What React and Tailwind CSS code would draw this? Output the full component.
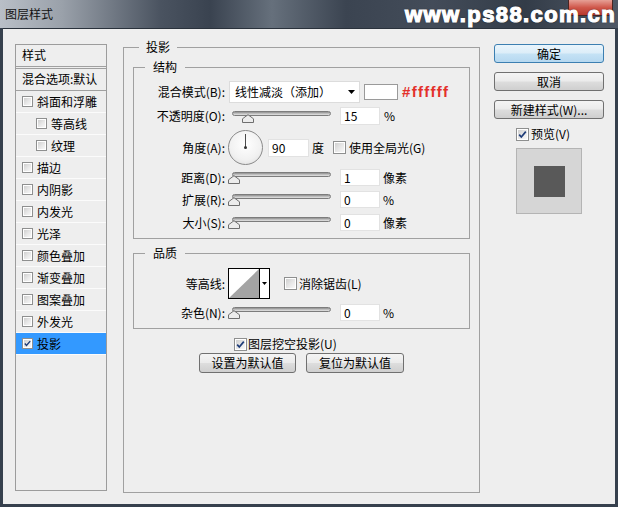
import React from "react";

const F = "font-['Noto_Sans_CJK_SC','Liberation_Sans',sans-serif]";

function Check({ checked, small }) {
  return (
    <span
      className={`relative inline-block shrink-0 border border-[#8e8f8f] bg-white ${
        small ? "w-[11px] h-[11px]" : "w-[13px] h-[13px]"
      }`}
    >
      <span className="absolute inset-[1px] bg-[linear-gradient(135deg,#d0d0d0_0%,#e6e6e6_50%,#f8f8f8_100%)]" />
      {checked && (
        <svg
          className="absolute inset-0"
          viewBox="0 0 11 11"
          width="100%"
          height="100%"
        >
          <path
            d="M2.2 5.6 L4.3 8 L8.8 2.6"
            fill="none"
            stroke="#1e3c78"
            strokeWidth="1.7"
          />
        </svg>
      )}
    </span>
  );
}

function Item({ label, indent, checked, selected }) {
  return (
    <div
      className={`h-[22px] flex items-center border-b border-[#fbfbfb] ${
        selected ? "bg-[#3399ff]" : ""
      } ${indent ? "pl-[20px]" : "pl-[6px]"}`}
    >
      <Check small checked={checked} />
      <span className="ml-[4px] leading-[14px]">{label}</span>
    </div>
  );
}

function Slider({ thumb }) {
  return (
    <div className="relative w-[104px] h-[17px] shrink-0">
      <div className="absolute left-[4px] top-[3px] w-[99px] h-[5px] rounded-full border border-[#7c7c7c] bg-[linear-gradient(180deg,#8e8e8e_0%,#bdbdbd_50%,#e4e4e4_100%)]" />
      <svg
        className={`absolute top-[6px] ${thumb}`}
        width="12"
        height="9"
        viewBox="0 0 12 9"
      >
        <path
          d="M0.5 8.5 V4.8 L6 0.7 L11.5 4.8 V8.5 Z"
          fill="#ececec"
          stroke="#6e6e6e"
        />
      </svg>
    </div>
  );
}

function Field({ children, w = "w-[40px]", h = "h-[17px]" }) {
  return (
    <div
      className={`${w} ${h} shrink-0 bg-white border border-[#e2e2e2] pl-[3px] flex items-center`}
    >
      {children}
    </div>
  );
}

function Label({ children }) {
  return <div className="w-[91px] shrink-0 text-right">{children}</div>;
}

function SliderRow({ label, value, unit, extra = "mt-[5px]" }) {
  return (
    <div className={`flex items-center h-[17px] ${extra}`}>
      <Label>{label}</Label>
      <div className="ml-[3px]">
        <Slider thumb="left-[0px]" />
      </div>
      <div className="ml-[8px]">
        <Field>{value}</Field>
      </div>
      <span className="ml-[3px]">{unit}</span>
    </div>
  );
}

function Button({ children, primary, className = "" }) {
  return (
    <div
      className={`flex items-center justify-center rounded-[3px] border ${
        primary
          ? "border-[#3c7fb1] bg-[linear-gradient(180deg,#eaf5fc_0%,#dcedf8_48%,#c5e2f5_52%,#b6d8f0_100%)]"
          : "border-[#707070] bg-[linear-gradient(180deg,#f4f4f4_0%,#ebebeb_48%,#dddddd_52%,#cfcfcf_100%)]"
      } ${className}`}
    >
      {children}
    </div>
  );
}

export default function App() {
  const items = [
    { label: "斜面和浮雕" },
    { label: "等高线", indent: true },
    { label: "纹理", indent: true },
    { label: "描边" },
    { label: "内阴影" },
    { label: "内发光" },
    { label: "光泽" },
    { label: "颜色叠加" },
    { label: "渐变叠加" },
    { label: "图案叠加" },
    { label: "外发光" },
    { label: "投影", checked: true, selected: true },
  ];

  return (
    <div
      className={`w-[618px] h-[507px] overflow-hidden bg-[#36404d] flex flex-col ${F} text-[12px] leading-[14px] text-black`}
    >
      {/* Title bar */}
      <div className="relative h-[28px] shrink-0 flex items-center justify-between pl-[5px] pr-[2px] bg-[linear-gradient(90deg,#b9bfc7_0%,#9aa1aa_10%,#4a5360_26%,#3a4350_34%,#66707c_44%,#3b4451_56%,#434c59_70%,#333c48_85%,#4f5865_100%)]">
        <div className="absolute right-[5px] top-0 w-[45px] h-[16px] rounded-b-[4px] border border-t-0 border-[#4a2522] bg-[linear-gradient(180deg,#e6a096_0%,#d0584b_50%,#b7382c_100%)]" />
        <span className="relative text-[#111]">图层样式</span>
        <span className="relative mt-[2px] font-['Liberation_Sans',sans-serif] font-bold text-[22px] leading-[24px] tracking-[1.4px] text-white [-webkit-text-stroke:1.2px_white] [text-shadow:0_0_2px_#000]">
          www.ps88.com.cn
        </span>
      </div>

      {/* Body */}
      <div className="flex-1 mx-[3px] mb-[3px] bg-[#eeeeee] border-t border-[#2a323c] flex items-start pl-[12px] pt-[11px]">
        {/* Left list */}
        <div className="mt-[4px] w-[92px] h-[447px] shrink-0 border border-[#9c9c9c]">
          <div className="h-[22px] border-b border-[#a0a0a0] pl-[6px] flex items-center pb-[2px]">
            样式
          </div>
          <div className="mt-[1px] h-[23px] border-t border-b border-[#a0a0a0] pl-[6px] flex items-center pb-[2px]">
            混合选项:默认
          </div>
          {items.map((it) => (
            <Item key={it.label} {...it} />
          ))}
        </div>

        {/* Main */}
        <fieldset className="ml-[16px] w-[357px] h-[453px] shrink-0 border border-[#a0a0a0] px-[9px] pt-[6px]">
          <legend className="ml-[6px] px-[7px] leading-[14px]">投影</legend>

          <fieldset className="w-[337px] border border-[#a0a0a0] pt-[7px] pb-[7px]">
            <legend className="ml-[11px] px-[8px] leading-[14px]">结构</legend>

            {/* blend mode */}
            <div className="flex items-center h-[22px]">
              <Label>混合模式(B):</Label>
              <div className="ml-[4px] w-[131px] h-[22px] bg-white border border-[#dcdcdc] flex items-center pl-[5px] pr-[4px] justify-between">
                <span>线性减淡（添加）</span>
                <svg width="7" height="4" viewBox="0 0 7 4">
                  <path d="M0 0H7L3.5 4Z" fill="#000" />
                </svg>
              </div>
              <div className="ml-[4px] w-[34px] h-[16px] bg-white border border-[#9a9a9a]" />
              <span className="ml-[4px] font-['Liberation_Sans',sans-serif] font-bold text-[15px] tracking-[1.3px] text-[#e3302a]">
                #ffffff
              </span>
            </div>

            {/* opacity */}
            <div className="flex items-center h-[18px] mt-[4px]">
              <Label>不透明度(O):</Label>
              <div className="ml-[3px]">
                <Slider thumb="left-[14px]" />
              </div>
              <div className="ml-[8px]">
                <Field h="h-[18px]">15</Field>
              </div>
              <span className="ml-[4px]">%</span>
            </div>

            {/* angle */}
            <div className="flex items-center h-[35px] mt-[5px]">
              <Label>角度(A):</Label>
              <div className="relative ml-[3px] w-[35px] h-[35px] shrink-0 rounded-full border border-[#8a8a8a] bg-[radial-gradient(circle_at_50%_40%,#ffffff_0%,#f1f1f1_60%,#d9d9d9_100%)]">
                <div className="absolute left-[16px] top-[3px] w-[1px] h-[14px] bg-[#4a4a4a]" />
                <div className="absolute left-[15px] top-[15px] w-[3px] h-[3px] rounded-full bg-[#333]" />
              </div>
              <div className="ml-[5px]">
                <Field w="w-[41px]" h="h-[18px]">
                  90
                </Field>
              </div>
              <span className="ml-[3px]">度</span>
              <div className="ml-[9px] flex items-center">
                <Check />
              </div>
              <span className="ml-[3px]">使用全局光(G)</span>
            </div>

            <SliderRow label="距离(D):" value="1" unit="像素" extra="mt-[4px]" />
            <SliderRow label="扩展(R):" value="0" unit="%" extra="mt-[5px]" />
            <SliderRow label="大小(S):" value="0" unit="像素" extra="mt-[6px]" />
          </fieldset>

          <fieldset className="mt-[7px] w-[337px] border border-[#a0a0a0] pt-[8px] pb-[7px]">
            <legend className="ml-[11px] px-[8px] leading-[14px]">品质</legend>

            <div className="flex items-center h-[31px]">
              <Label>等高线:</Label>
              <div className="ml-[3px] w-[42px] h-[31px] shrink-0 border border-black bg-white flex">
                <svg width="30" height="29" viewBox="0 0 30 29" className="block">
                  <rect width="30" height="29" fill="#ffffff" />
                  <path d="M0 29 L30 0 V29 Z" fill="#a4a4a4" />
                </svg>
                <div className="flex-1 border-l border-black flex items-center justify-center">
                  <svg width="5" height="3" viewBox="0 0 5 3">
                    <path d="M0 0H5L2.5 3Z" fill="#000" />
                  </svg>
                </div>
              </div>
              <div className="ml-[14px] flex items-center">
                <Check />
              </div>
              <span className="ml-[2px]">消除锯齿(L)</span>
            </div>

            <SliderRow label="杂色(N):" value="0" unit="%" extra="mt-[5px]" />
          </fieldset>

          <div className="mt-[8px] h-[14px] flex items-center ml-[101px]">
            <Check checked />
            <span className="ml-[1px]">图层挖空投影(U)</span>
          </div>

          <div className="mt-[2px] flex justify-center gap-[10px]">
            <Button className="w-[97px] h-[20px]">设置为默认值</Button>
            <Button className="w-[98px] h-[20px]">复位为默认值</Button>
          </div>
        </fieldset>

        {/* Right column */}
        <div className="ml-[14px] mt-[4px] w-[110px] shrink-0 flex flex-col">
          <Button primary className="h-[19px]">
            确定
          </Button>
          <Button className="h-[19px] mt-[9px]">取消</Button>
          <Button className="h-[19px] mt-[9px]">新建样式(W)...</Button>
          <div className="mt-[8px] h-[14px] flex items-center pl-[22px]">
            <Check checked />
            <span className="ml-[2px]">预览(V)</span>
          </div>
          <div className="mt-[7px] ml-[22px] w-[66px] h-[66px] border border-[#b4b4b4] bg-[#d6d6d6] flex items-center justify-center">
            <div className="w-[31px] h-[31px] bg-[#595959]" />
          </div>
        </div>
      </div>
    </div>
  );
}
